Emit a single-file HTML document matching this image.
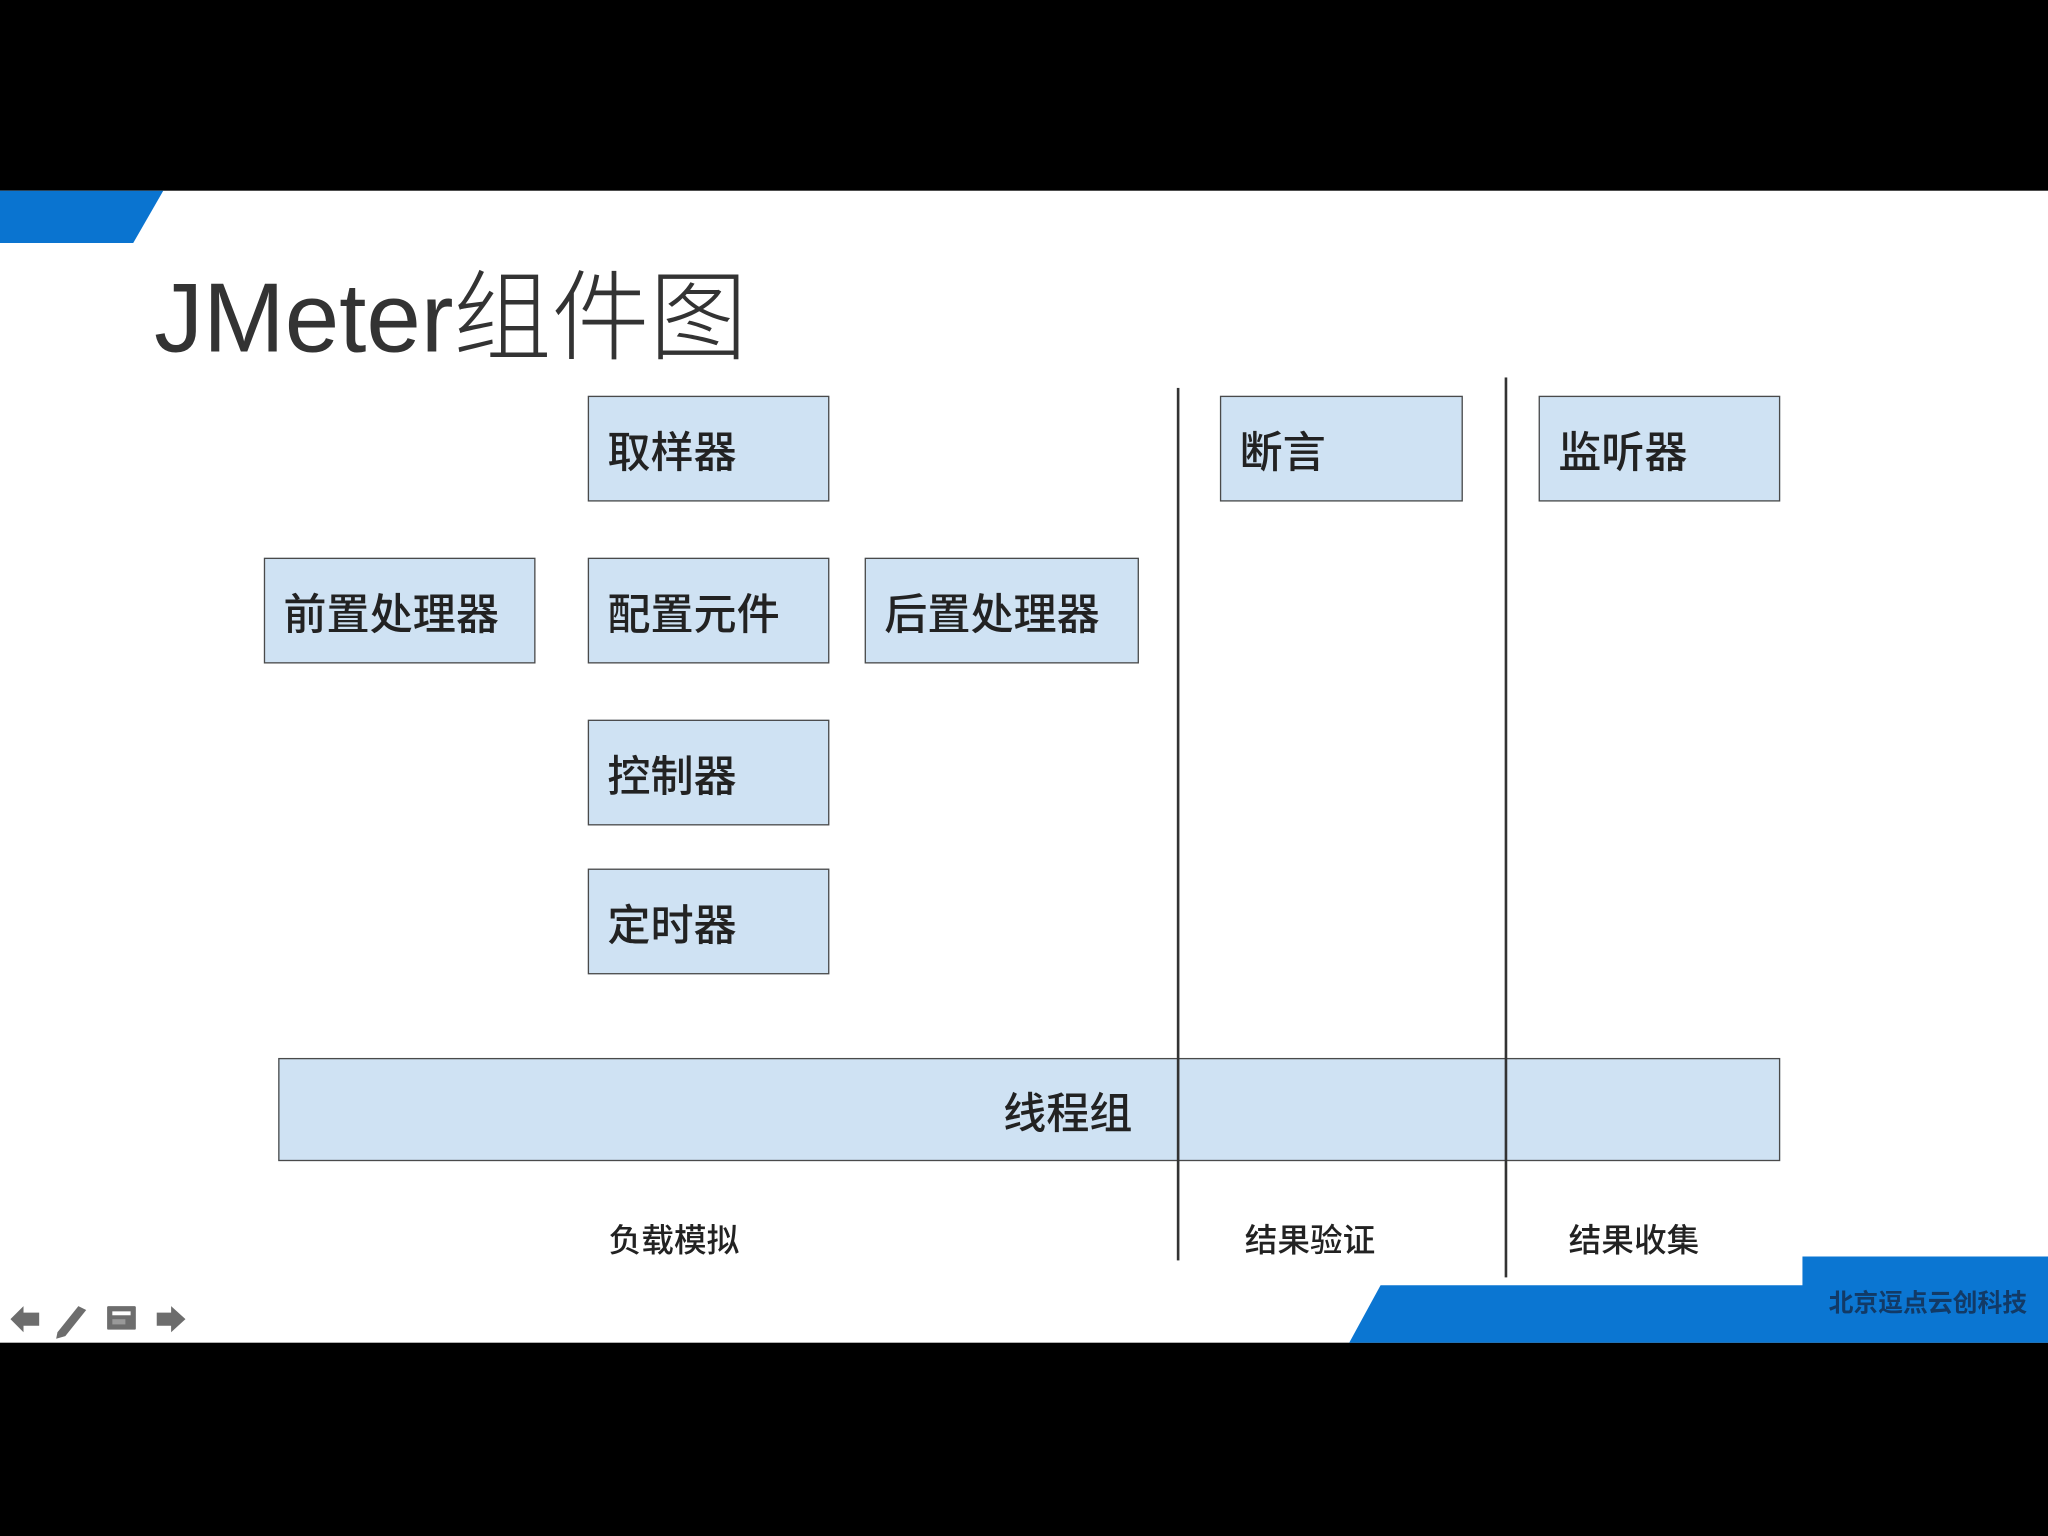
<!DOCTYPE html>
<html><head><meta charset="utf-8"><style>
html,body{margin:0;padding:0;background:#000;width:2048px;height:1536px;overflow:hidden}
#s{position:absolute;left:0;top:0;width:1568px;height:1176px;transform:scale(1.306122);transform-origin:0 0;font-family:"Liberation Sans","Noto Sans CJK SC",sans-serif}
#slide{position:absolute;left:0;top:146px;width:1568px;height:882px;background:#fff}
.b{position:absolute;background:#cfe2f3;border:1.5px solid #4a4a4a;box-sizing:border-box;font-size:33px;font-weight:500;color:#222;display:flex;align-items:center;padding-left:14px;padding-top:0}
.v{position:absolute;width:1.5px;background:#333}
.l{position:absolute;font-size:25px;color:#222;transform:translateX(-50%);white-space:nowrap;font-weight:500}
</style></head><body><div id="s">
<div id="slide"></div>
<svg style="position:absolute;left:0;top:0" width="1568" height="1176">
<polygon points="0,146 125,146 102,186 0,186" fill="#0a74d0"/>
<polygon points="1057,984 1380,984 1380,962 1568,962 1568,1028 1033,1028" fill="#0b76d2"/>
<g fill="#6d6d6d">
<polygon points="8,1010 18,1000 18,1005 30,1005 30,1015 18,1015 18,1020"/>
<polygon points="44,1020 60,1000 66,1003 50,1023 43,1025"/>
<rect x="82" y="1000" width="22" height="18" rx="1"/>
<polygon points="120,1005 131,1005 131,1000 142,1010 131,1020 131,1015 120,1015"/>
</g>
<rect x="86" y="1004" width="14" height="3" fill="#fff"/>
<rect x="86" y="1010" width="10" height="4" fill="#999"/>
</svg>
<div style="position:absolute;left:118px;top:198px;font-size:75px;color:#333;line-height:90px;font-weight:300;white-space:nowrap">JMeter组件图</div>
<div class="b" style="left:450px;top:303px;width:185px;height:81px">取样器</div>
<div class="b" style="left:202px;top:427px;width:208px;height:81px">前置处理器</div>
<div class="b" style="left:450px;top:427px;width:185px;height:81px">配置元件</div>
<div class="b" style="left:662px;top:427px;width:210px;height:81px">后置处理器</div>
<div class="b" style="left:450px;top:551px;width:185px;height:81px">控制器</div>
<div class="b" style="left:450px;top:665px;width:185px;height:81px">定时器</div>
<div class="b" style="left:934px;top:303px;width:186px;height:81px">断言</div>
<div class="b" style="left:1178px;top:303px;width:185px;height:81px">监听器</div>
<div class="b" style="left:213px;top:810px;width:1150px;height:79px;justify-content:flex-start;padding-left:554px">线程组</div>
<div class="v" style="left:901px;top:297px;height:668px"></div>
<div class="v" style="left:1152px;top:289px;height:689px"></div>
<div class="l" style="left:516px;top:930px">负载模拟</div>
<div class="l" style="left:1003px;top:930px">结果验证</div>
<div class="l" style="left:1251px;top:930px">结果收集</div>
<div style="position:absolute;left:1400px;top:983px;font-size:19px;font-weight:bold;color:#123a66;white-space:nowrap">北京逗点云创科技</div>
</div></body></html>
